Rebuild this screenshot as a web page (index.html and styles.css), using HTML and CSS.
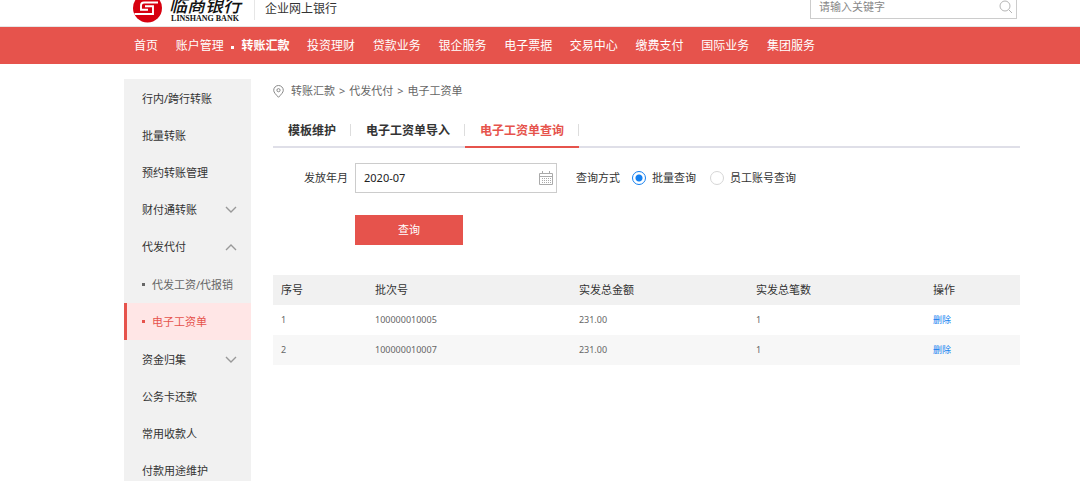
FILE: index.html
```html
<!DOCTYPE html>
<html lang="zh-CN">
<head>
<meta charset="utf-8">
<title>企业网上银行</title>
<link rel="stylesheet" href="styles.css">
</head>
<body>
<header class="header wrap">
  <div class="brand">
    <svg class="emblem" viewBox="0 0 29 23" aria-hidden="true">
      <circle cx="14.500" cy="8" r="14.500" fill="#d7000f"/>
      <path d="M25 2.500H11Q8 2.500 8 5.500V9.800H15M12 6.300H20V14H1.500" fill="none" stroke="#fff" stroke-width="1.900"/>
    </svg>
    <div class="brand-text">
      <span class="brand-cn">临商银行</span>
      <span class="brand-en">LINSHANG BANK</span>
    </div>
    <span class="brand-sub">企业网上银行</span>
  </div>
  <form class="search">
    <input class="search-input" type="text" placeholder="请输入关键字" aria-label="请输入关键字">
    <button class="search-btn" type="button" aria-label="搜索">
      <svg viewBox="0 0 14 14"><circle cx="6" cy="6" r="5"/><path d="M10 10l3 3"/></svg>
    </button>
  </form>
</header>
<nav class="nav">
  <div class="wrap">
    <ul class="nav-list">
      <li><a href="#">首页</a></li>
      <li><a href="#">账户管理</a></li>
      <li class="current"><a href="#">转账汇款</a></li>
      <li><a href="#">投资理财</a></li>
      <li><a href="#">贷款业务</a></li>
      <li><a href="#">银企服务</a></li>
      <li><a href="#">电子票据</a></li>
      <li><a href="#">交易中心</a></li>
      <li><a href="#">缴费支付</a></li>
      <li><a href="#">国际业务</a></li>
      <li><a href="#">集团服务</a></li>
    </ul>
  </div>
</nav>
<div class="page wrap">
  <aside class="side">
    <a class="side-item" href="#">行内/跨行转账</a>
    <a class="side-item" href="#">批量转账</a>
    <a class="side-item" href="#">预约转账管理</a>
    <a class="side-item" href="#">财付通转账<svg class="arrow" viewBox="0 0 12 8"><path d="M1 1l5 5 5-5"/></svg></a>
    <a class="side-item" href="#">代发代付<svg class="arrow" viewBox="0 0 12 8"><path d="M1 7l5-5 5 5"/></svg></a>
    <div class="side-sub">
      <a class="side-item sub" href="#">代发工资/代报销</a>
      <a class="side-item sub active" href="#">电子工资单</a>
    </div>
    <a class="side-item" href="#">资金归集<svg class="arrow" viewBox="0 0 12 8"><path d="M1 1l5 5 5-5"/></svg></a>
    <a class="side-item" href="#">公务卡还款</a>
    <a class="side-item" href="#">常用收款人</a>
    <a class="side-item" href="#">付款用途维护</a>
  </aside>
  <main class="main">
    <div class="crumbs">
      <svg class="pin" viewBox="0 0 11 13"><path d="M5.500 12.300C3 9.500.7 7.500.7 5.300a4.800 4.800 0 0 1 9.600 0C10.300 7.500 8 9.500 5.500 12.300z"/><circle cx="5.500" cy="5.200" r="1.600"/></svg>
      <a href="#">转账汇款</a><span>&gt;</span><a href="#">代发代付</a><span>&gt;</span><a href="#">电子工资单</a>
    </div>
    <div class="tabs">
      <a class="tab" href="#">模板维护</a>
      <a class="tab" href="#">电子工资单导入</a>
      <a class="tab on" href="#">电子工资单查询</a>
    </div>
    <form class="query">
      <label class="label" for="month">发放年月</label>
      <div class="date">
        <input id="month" type="text" value="2020-07">
        <svg class="cal" viewBox="0 0 14 14"><path d="M.5 2.500h13v11H.5zM.5 5.500h13M3.500 0v3M10.500 0v3"/><path d="M3 7.500h9M3 9.500h9M3 11.500h9" stroke-dasharray="1 1"/></svg>
      </div>
      <fieldset class="modes">
        <legend class="modes-title">查询方式</legend>
        <label class="mode"><input type="radio" name="mode" checked>批量查询</label>
        <label class="mode"><input class="idle" type="radio" name="mode">员工账号查询</label>
      </fieldset>
      <button class="submit" type="button">查询</button>
    </form>
    <table class="list">
      <colgroup><col class="c1"><col class="c2"><col class="c3"><col class="c3"><col></colgroup>
      <thead><tr><th>序号</th><th>批次号</th><th>实发总金额</th><th>实发总笔数</th><th>操作</th></tr></thead>
      <tbody>
        <tr><td>1</td><td>100000010005</td><td>231.00</td><td>1</td><td><a href="#">删除</a></td></tr>
        <tr><td>2</td><td>100000010007</td><td>231.00</td><td>1</td><td><a href="#">删除</a></td></tr>
      </tbody>
    </table>
  </main>
</div>
</body>
</html>
```

FILE: styles.css
```css
* { box-sizing: border-box; }
body {
  margin: 0;
  background: #fff;
  color: #333;
  font: 11px/16px "Noto Sans", "Noto Sans CJK SC", sans-serif;
  overflow: hidden;
}
a { color: inherit; text-decoration: none; }
ul { list-style: none; margin: 0; padding: 0; }
input, button { font: inherit; color: inherit; margin: 0; }
.wrap { padding: 0 60px 0 124px; }

.header { display: flex; justify-content: space-between; align-items: flex-start; height: 27px; border-bottom: 1px solid #e6e6e6; }
.brand { display: flex; padding-left: 9px; }
.emblem { width: 29px; height: 23px; }
.brand-text { display: flex; flex-direction: column; align-items: center; width: 76px; margin-left: 6px; padding-right: 2px; color: #111; }
.brand-cn { font-size: 18px; line-height: 10px; font-style: italic; font-weight: 500; white-space: nowrap; }
.brand-en { margin-top: 4px; font: bold 8px/9px "Liberation Serif", serif; white-space: nowrap; }
.brand-sub { margin-left: 10px; padding-left: 10px; height: 20px; line-height: 18px; border-left: 1px solid #e6e6e6; font-size: 12px; }
.search { display: flex; align-items: center; width: 207px; height: 19px; margin-right: 3px; padding: 0 3px 4px 8px; border: 1px solid #ccc; border-top: 0; }
.search-input { flex: 1; min-width: 0; padding: 0; border: 0; outline: 0; background: none; height: 16px; }
.search-input::placeholder { color: #888; opacity: 1; }
.search-btn { display: flex; padding: 0; border: 0; background: none; }
.search-btn svg { width: 14px; height: 14px; fill: none; stroke: #b5b5b5; }

.nav { background: #e6534c; color: #fff; font-size: 12px; line-height: 37px; }
.nav-list { display: flex; justify-content: space-between; width: 76%; margin-left: 10px; white-space: nowrap; }
.nav .current { position: relative; font-weight: bold; }
.nav .current::before { content: ""; position: absolute; left: -10px; top: 19px; width: 3px; height: 3px; background: #fff; }

.page { display: flex; align-items: flex-start; padding-top: 15px; }
.side { flex: 0 0 127px; padding-top: 1px; background: #f1f1f1; }
.side-item { display: flex; align-items: center; justify-content: space-between; height: 37px; padding: 0 14px 0 18px; }
.arrow { width: 12px; height: 8px; fill: none; stroke: #999; stroke-width: 1.4; }
.side-sub { padding: 1px 0; }
.sub { justify-content: flex-start; gap: 7px; color: #666; padding-right: 0; white-space: nowrap; }
.sub::before { content: ""; width: 3px; height: 3px; background: currentColor; }
.sub.active { padding-left: 15px; border-left: 3px solid #e6534c; background: #ffe6e6; color: #e6534c; }

.main { flex: 1; min-width: 0; margin-left: 22px; }
.crumbs { display: flex; align-items: center; gap: 4px; height: 24px; color: #666; }
.pin { width: 11px; height: 13px; margin-right: 3px; fill: none; stroke: #888; }
.tabs { display: flex; margin-top: 10px; border-bottom: 2px solid #dfdfe8; font-size: 12px; font-weight: bold; }
.tab { position: relative; height: 33px; line-height: 35px; padding: 0 15px; margin-bottom: -2px; box-sizing: content-box; }
.tab::after { content: ""; position: absolute; right: 0; top: 11px; width: 1px; height: 12px; background: #ddd; }
.tab.on { color: #e6534c; border-bottom: 2px solid #e6534c; }
.query { display: grid; grid-template-columns: 75px 202px 1fr; column-gap: 7px; row-gap: 22px; margin-top: 15px; align-items: center; }
.label { text-align: right; }
.date { display: flex; align-items: center; height: 30px; padding: 0 3px 0 8px; border: 1px solid #ccc; }
.date input { flex: 1; min-width: 0; border: 0; padding: 0; outline: 0; color: #222; }
.cal { width: 14px; height: 14px; fill: none; stroke: #aaa; }
.modes { display: flex; align-items: center; border: 0; margin: 0; padding: 0 0 0 12px; min-width: 0; }
.modes-title { float: left; padding: 0; margin-right: 12px; }
.mode { display: flex; align-items: center; gap: 6px; margin-right: 14px; }
.mode input { appearance: none; width: 14px; height: 14px; border: 1px solid #d6d6d6; border-radius: 50%; }
.mode input:checked { border-color: #1480f0; background: radial-gradient(circle, #1480f0 3px, #fff 4px); }
.submit { grid-column: 2; width: 108px; height: 30px; border: 0; padding: 0; background: #e6534c; color: #fff; }

.list { width: 100%; margin-top: 30px; border-collapse: collapse; table-layout: fixed; text-align: left; }
.list th, .list td { height: 30px; padding: 0 0 0 8px; }
.list th { background: #f1f1f1; font-weight: normal; }
.list td { height: 29px; padding-bottom: 1px; font-size: 9px; color: #666; }
.list tbody tr { height: 30px; }
.list tbody tr:nth-child(2) { background: #f7f7f7; }
.list a { color: #1480f0; }
.c1 { width: 94px; }
.c2 { width: 27.3%; }
.c3 { width: 23.7%; }
```
